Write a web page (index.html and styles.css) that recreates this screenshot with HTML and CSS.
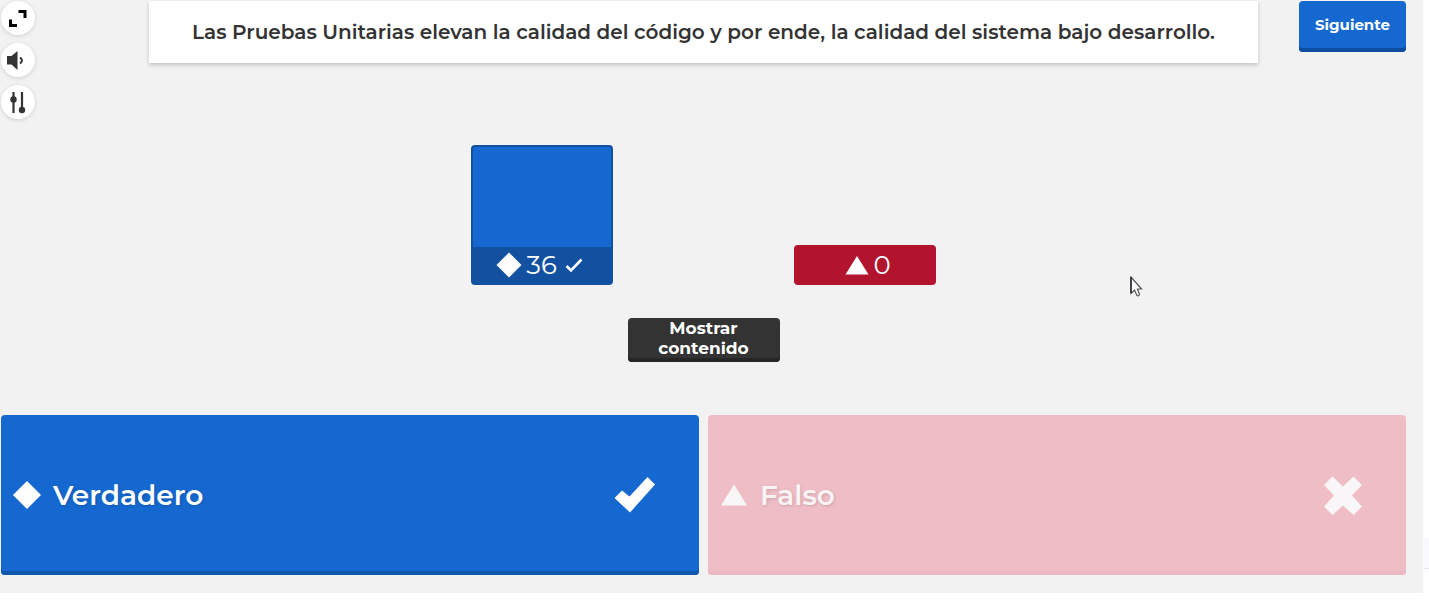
FILE: index.html
```html
<!DOCTYPE html>
<html lang="es">
<head>
<meta charset="utf-8">
<meta name="viewport" content="width=device-width, initial-scale=1">
<title>Pruebas Unitarias</title>
<link rel="stylesheet" href="styles.css">
</head>
<body>
<main class="stage">
  <header class="top">
    <nav class="tools" aria-label="Controles">
      <button class="tool" aria-label="Pantalla completa">
        <svg width="34" height="34" viewBox="0 0 34 34"><path d="M17.500 9H25.500V17H22.500V12H17.500ZM8 18.500H11V23H16V26H8Z" fill="#000"/></svg>
      </button>
      <button class="tool" aria-label="Volumen">
        <svg width="34" height="34" viewBox="0 0 34 34"><path d="M6 13H10.500L16.500 8V27L10.500 21.500H6Z" fill="#333"/><path d="M19 14.500Q23 17.500 19 20.500" fill="none" stroke="#333" stroke-width="2"/></svg>
      </button>
      <button class="tool" aria-label="Ajustes">
        <svg width="34" height="34" viewBox="0 0 34 34"><path d="M12.500 7V28M21 7V25" stroke="#333" stroke-width="2.200"/><circle cx="12.500" cy="14.500" r="3.200" fill="#333"/><circle cx="21" cy="25" r="3.200" fill="#333"/></svg>
      </button>
    </nav>
    <h1 class="question">Las Pruebas Unitarias elevan la calidad del código y por ende, la calidad del sistema bajo desarrollo.</h1>
    <button class="next">Siguiente</button>
  </header>

  <section class="chart" aria-label="Resultados">
    <div class="bar bar-blue">
      <div class="bar-fill"></div>
      <div class="bar-label">
        <svg width="26" height="26" viewBox="0 0 26 26"><path d="M13 .5L25.500 13L13 25.500L.5 13Z" fill="#fff"/></svg>
        <span>36</span>
        <svg class="tick" width="18" height="18" viewBox="0 0 18 18"><path d="M1.500 10L6 14.500L16.500 3.500" fill="none" stroke="#fff" stroke-width="2.600"/></svg>
      </div>
    </div>
    <div class="bar bar-red">
      <div class="bar-label">
        <svg width="24" height="20" viewBox="0 0 24 20"><path d="M12 1L23.500 19.500H.5Z" fill="#fff"/></svg>
        <span>0</span>
      </div>
    </div>
  </section>

  <button class="show">Mostrar contenido</button>

  <section class="answers" aria-label="Respuestas">
    <button class="answer answer-true">
      <svg width="28" height="28" viewBox="0 0 28 28"><path d="M14 0L28 14L14 28L0 14Z" fill="#fff"/></svg>
      <span class="answer-text">Verdadero</span>
      <svg width="42" height="38" viewBox="0 0 42 38"><path d="M33.500 1L41 8.500L16 36.500L.5 22L8 14.500L15.500 20.500Z" fill="#fff"/></svg>
    </button>
    <button class="answer answer-false">
      <svg width="28" height="28" viewBox="0 0 28 28"><path d="M14 3.500L27 24.500H1Z" fill="#f8f6f6"/></svg>
      <span class="answer-text">Falso</span>
      <svg width="40" height="40" viewBox="0 0 40 40"><path d="M9.500 1.500L20 11.500L30.500 1.500L39 10L29 20.500L39 31.500L30.500 40L20 30.500L9.500 40L1 31.500L11 20.500L1 10Z" fill="#f8f6f6"/></svg>
    </button>
  </section>

  <svg class="cursor" width="14" height="22" viewBox="0 0 14 22"><path d="M1 1V17.500L4.500 14L7 19.500Q8.500 20.500 9.500 18.500L7.500 13H11.500Z" fill="#fff" stroke="#555" stroke-width="1.200"/><path d="M1 1V17" stroke="#181824" stroke-width="1.300"/></svg>
  <div class="edge"></div>
</main>
</body>
</html>
```
FILE: styles.css
```css
* {
  box-sizing: border-box;
}

body {
  margin: 0;
  background: #fff;
  color: #333;
  font-family: Montserrat, Inter, "Open Sans", sans-serif;
}

button {
  margin: 0;
  padding: 0;
  border: 0;
  font: inherit;
  cursor: pointer;
}

svg {
  display: block;
  flex: none;
}

.stage {
  position: relative;
  display: flex;
  flex-direction: column;
  margin-right: 6px;
  padding: 1px 17px 18px 1px;
  background: #f2f2f2;
}

.top {
  display: flex;
  align-items: flex-start;
}

.tools {
  display: flex;
  flex-direction: column;
  gap: 8px;
}

.tool {
  width: 34px;
  height: 34px;
  border-radius: 50%;
  background: #fff;
  box-shadow: 0 1px 4px rgba(0, 0, 0, 0.15);
}

.question {
  flex: 1;
  margin: 0 41px 0 114px;
  padding: 17px 24px;
  background: #fff;
  box-shadow: 0 2px 4px rgba(0, 0, 0, 0.2);
  font-size: 20px;
  font-weight: 600;
  line-height: 28px;
  text-align: center;
}

.next {
  width: 107px;
  height: 51px;
  padding-bottom: 4px;
  border-radius: 4px;
  background: #1568cf;
  box-shadow: inset 0 -4px #0d4da0;
  color: #fff;
  font-size: 15px;
  font-weight: 700;
}

.chart {
  display: flex;
  justify-content: center;
  align-items: flex-end;
  gap: 181px;
  margin-top: 26px;
}

.bar {
  width: 142px;
  overflow: hidden;
  border-radius: 4px;
}

.bar-blue {
  border: 2px solid #1250a0;
  background: #1568cf;
}

.bar-red {
  background: #b2132d;
}

.bar-fill {
  height: 100px;
}

.bar-label {
  display: flex;
  justify-content: center;
  align-items: center;
  gap: 4px;
  height: 40px;
  padding-left: 6px;
  color: #fff;
  font-size: 26px;
}

.bar-blue .bar-label {
  height: 36px;
  padding: 0 5px 0 0;
  background: #1250a0;
}

.tick {
  margin-left: 4px;
}

.show {
  align-self: center;
  width: 152px;
  height: 44px;
  margin-top: 33px;
  padding: 0 24px 4px;
  border-radius: 4px;
  background: #333;
  box-shadow: inset 0 -4px #262626;
  color: #fff;
  font-size: 17px;
  font-weight: 700;
  line-height: 20px;
}

.answers {
  display: grid;
  grid-template-columns: 1fr 1fr;
  gap: 9px;
  margin-top: 53px;
}

.answer {
  display: flex;
  align-items: center;
  height: 160px;
  padding: 0 43px 0 12px;
  border-radius: 4px;
  color: #fff;
  font-size: 28px;
  font-weight: 600;
  text-align: left;
}

.answer-text {
  flex: 1;
  margin-left: 12px;
  text-shadow: 1px 1px 3px rgba(0, 0, 0, 0.15);
}

.answer-true {
  background: #1568cf;
  box-shadow: inset 0 -4px #1057ae;
}

.answer-false {
  background: #efbdc6;
  box-shadow: inset 0 -4px #eab8c2;
  color: #f8f4f5;
}

.cursor {
  position: absolute;
  top: 276px;
  left: 1130px;
}

.edge {
  position: absolute;
  top: 538px;
  right: -6px;
  width: 5px;
  height: 31px;
  border-bottom: 1px solid #e4e4f0;
  background: #f8f8fe;
}
```
